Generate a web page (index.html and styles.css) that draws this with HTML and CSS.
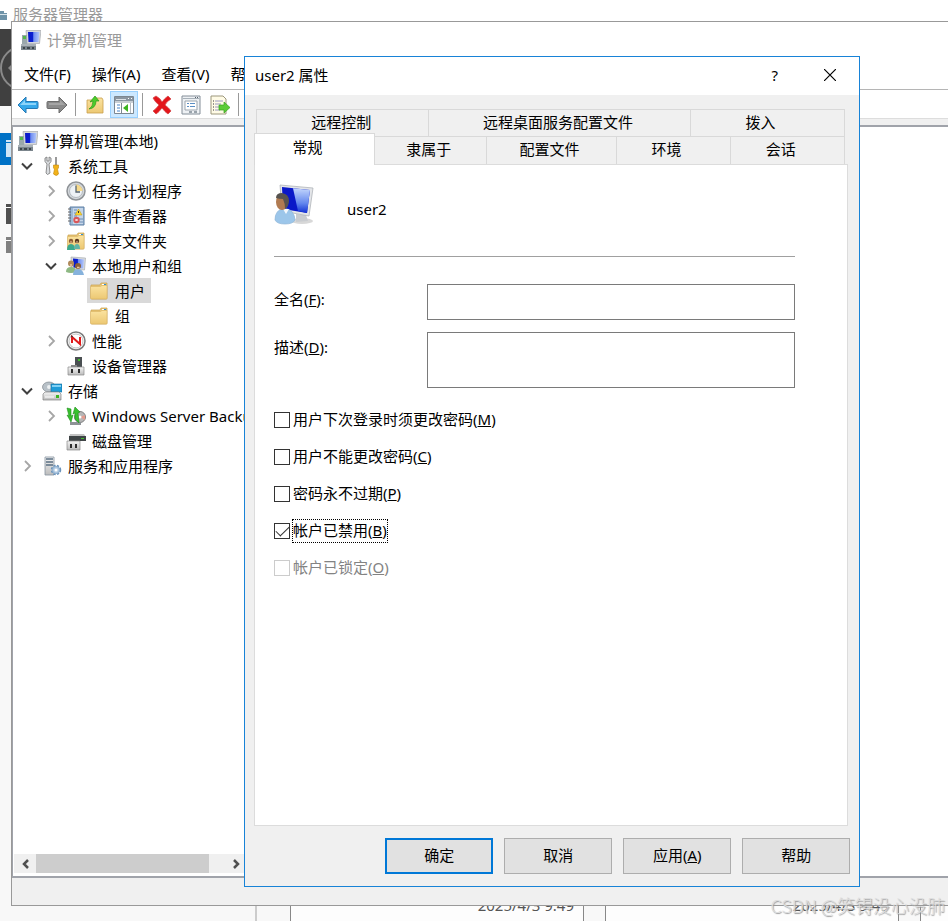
FILE: index.html
```
<!DOCTYPE html>
<html lang="zh-CN">
<head>
  <meta charset="UTF-8">
  <meta name="viewport" content="width=device-width, initial-scale=1.0">
  <title>user2 属性</title>
  <link rel="stylesheet" href="styles.css">
</head>
<body>
  <!-- shared icons -->
  <svg class="defs" width="0" height="0">
    <defs>
      <linearGradient id="blueScreen" x1="0" y1="0" x2="1" y2="0">
        <stop offset="0" stop-color="#0a18c8"/>
        <stop offset="0.4" stop-color="#0a1fd0"/>
        <stop offset="0.5" stop-color="#6f8df0"/>
        <stop offset="1" stop-color="#b4c8fa"/>
      </linearGradient>
      <linearGradient id="userScreen" x1="0" y1="0" x2="0" y2="1">
        <stop offset="0" stop-color="#c3d6fc"/>
        <stop offset="0.6" stop-color="#6488ee"/>
        <stop offset="1" stop-color="#1030d4"/>
      </linearGradient>
      <linearGradient id="folderFill" x1="0" y1="0" x2="0" y2="1">
        <stop offset="0" stop-color="#fbe3a0"/>
        <stop offset="1" stop-color="#ecc873"/>
      </linearGradient>
      <linearGradient id="metal" x1="0" y1="0" x2="0" y2="1">
        <stop offset="0" stop-color="#f4f4f4"/>
        <stop offset="1" stop-color="#bcbcbc"/>
      </linearGradient>
      <symbol id="computer" viewBox="0 0 20 20">
        <path d="M5 .5h15l-1.500 13H6z" fill="#d5d8dc" stroke="#9a9ea3" stroke-width=".6"/>
        <path d="M7 2h11.500l-1 10H7.500z" fill="url(#blueScreen)"/>
        <path d="M1 5h5v9H1z" fill="#9aa7ab"/>
        <path d="M2 6h3v3H2z" fill="#55b84a"/>
        <path d="M0 14h15v6H0z" fill="#7b858c"/>
        <path d="M0 14h15v2H0z" fill="#a9b1b7"/>
        <path d="M2 17h2v2H2zM6 17h3v2H6zM11 17h2v2h-2z" fill="#3d464c"/>
      </symbol>
      <symbol id="folder" viewBox="0 0 20 20">
        <path d="M2 4l9 0 1-2h6v15q0 1-1 1H3q-1 0-1-1z" fill="#e9c677" stroke="#c79f4a" stroke-width=".7"/>
        <path d="M13 3h4v1h-4z" fill="#fff"/>
        <path d="M15 3h2v1h-2z" fill="#2b8fd8"/>
        <path d="M1.500 5.500h10l1.500-1h5V18H2.500q-1 0-1-1z" fill="url(#folderFill)" stroke="#d5ad59" stroke-width=".5"/>
      </symbol>
      <symbol id="open" viewBox="0 0 12 12">
        <path d="M1 3.500l5 5 5-5" fill="none" stroke="#404040" stroke-width="2"/>
      </symbol>
      <symbol id="closed" viewBox="0 0 12 12">
        <path d="M4 1l5 5-5 5" fill="none" stroke="#a6a6a6" stroke-width="1.800"/>
      </symbol>
    </defs>
  </svg>

  <main class="desktop">
    <!-- server manager, mostly covered -->
    <section class="server">
      <header class="server-title">
        <svg width="8" height="12" viewBox="0 0 8 12"><path d="M0 3h4v2h3v7H0z" fill="#6f93a8"/><path d="M0 6h7v1H0z" fill="#d8e4ea"/></svg>
        服务器管理器
      </header>
      <div class="server-banner">
        <svg width="12" height="77" viewBox="0 0 12 77"><circle cx="22" cy="39" r="21" fill="none" stroke="#8a8a8a" stroke-width="2"/><path d="M12 35l-4 4 4 4z" fill="#8a8a8a"/></svg>
      </div>
      <svg class="server-nav" width="12" height="130" viewBox="0 0 12 130">
        <path d="M0 0h12v32H0z" fill="#0072c6"/>
        <path d="M6 7h6v17H6z" fill="#cfe5f6"/><path d="M6 9h6v1H6z" fill="#0072c6"/>
        <path d="M11 39h1v19h-1z" fill="#555"/>
        <path d="M6 71h6v20H6z" fill="#505050"/><path d="M6 74h6v1H6z" fill="#fff"/>
        <path d="M6 104h6v16H6z" fill="#808080"/><path d="M6 107h6v1H6z" fill="#fff"/>
      </svg>
      <div class="server-tiles">
        <div class="tile">2025/4/3 9:49</div>
        <div class="tile">2025/4/3 9:49</div>
        <div class="tile"></div>
      </div>
    </section>

    <section class="manager">
      <header class="manager-title">
        <svg width="20" height="20"><use href="#computer"/></svg>
        计算机管理
      </header>
      <nav class="menu">
        <button>文件(F)</button>
        <button>操作(A)</button>
        <button>查看(V)</button>
        <button>帮助(H)</button>
      </nav>
      <div class="toolbar">
        <button aria-label="后退"><svg width="22" height="20" viewBox="0 0 22 20"><path d="M1 10l8-8v4.500h11q1 0 1 1v5q0 1-1 1H9V18z" fill="#35a8ea" stroke="#2479b5"/><path d="M3 10l5-5v3h11v2z" fill="#8cd4fa"/></svg></button>
        <button aria-label="前进"><svg width="22" height="20" viewBox="0 0 22 20"><path d="M21 10l-8-8v4.500H2q-1 0-1 1v5q0 1 1 1h11V18z" fill="#8b8b8b" stroke="#6c6c6c"/><path d="M19 10l-5-5v3H3v2z" fill="#a5a5a5"/></svg></button>
        <span class="sep"></span>
        <button aria-label="向上"><svg width="20" height="20" viewBox="0 0 20 20"><path d="M2 5h7l1-2h7l1 2v13H2z" fill="url(#folderFill)" stroke="#c9a04c" stroke-width=".8"/><path d="M4 14q4-2 4-8l-3 1 5-6 4 5-3 0Q11 13 4 14z" fill="#4ccb2c" stroke="#2c9a19" stroke-width=".7"/></svg></button>
        <button class="on" aria-label="显示控制台树"><svg width="20" height="18" viewBox="0 0 20 18"><path d="M.5.500h19v17H.500z" fill="#fff" stroke="#7c8791"/><path d="M1 1h18v4H1z" fill="#8a96a2"/><path d="M2 3h10v1H2z" fill="#dce2e8"/><path d="M14 2h1v1h-1zM17 2h1v1h-1z" fill="#fff"/><path d="M1 5h18v2H1z" fill="#c8ced4"/><path d="M7.500 7v10" stroke="#7c8791"/><path d="M3 9h3M3 12h3M3 15h3" stroke="#4684c8"/><path d="M14 8v8l-5-4z" fill="#3db421"/><path d="M16.500 7v10" stroke="#b3bac1"/></svg></button>
        <span class="sep"></span>
        <button aria-label="删除"><svg width="20" height="20" viewBox="0 0 20 20"><path d="M1 3l3-2q4 2 6 6 3-4 6-6l3 3q-4 2-6 6 4 3 6 6l-3 3q-3-2-6-6-3 4-6 6l-3-3q3-2 6-6-4-3-6-7z" fill="#e3161b" stroke="#d4474a" stroke-width=".8"/></svg></button>
        <button aria-label="属性"><svg width="20" height="20" viewBox="0 0 20 20"><path d="M1 1h18v18H1z" fill="#eef1f4" stroke="#848e98"/><path d="M2 3.500h16" stroke="#a7b0b8"/><path d="M14 2h1v1h-1zM16 2h1v1h-1z" fill="#57626c"/><path d="M4 6h12v9H4z" fill="#fff" stroke="#9da6ae"/><path d="M6 8.500h2M9 8.500h5M6 11.500h2M9 11.500h5" stroke="#5b8fc5"/><path d="M8 17h3M13 17h3" stroke="#7e8993" stroke-width="1.500"/></svg></button>
        <button aria-label="导出列表"><svg width="20" height="20" viewBox="0 0 20 20"><path d="M1 1h12l3 3v15H1z" fill="#fffbe6" stroke="#9c977c"/><path d="M3 6h1M3 9h1M3 12h1M3 15h1" stroke="#333"/><path d="M5 6h8M5 9h6M5 12h4M5 15h5" stroke="#9a9ac0"/><path d="M9 10h5V7l6 5.500-6 5.500v-3H9z" fill="#5ccc38" stroke="#37a31c" stroke-width=".7"/></svg></button>
        <span class="sep"></span>
      </div>
      <div class="panes">
        <div class="tree-pane">
          <ul class="tree">
            <li class="root"><svg class="icon" viewBox="0 0 20 20"><use href="#computer"/></svg>计算机管理(本地)</li>
            <li class="l1"><svg class="arrow"><use href="#open"/></svg>
              <svg class="icon" viewBox="0 0 20 20"><path d="M3 2q-1 4 2 6l-1 9q1 3 4 0L7 8q3-2 2-6L7 1v4H5V1z" fill="#d9dcdf" stroke="#777" stroke-width=".8"/><path d="M13 1h2v9h-2z" fill="#999"/><path d="M11.500 9h5v3l-1 1 1 5q-2 3-5 0l1-5-1-1z" fill="#f2b21a" stroke="#bf860d" stroke-width=".6"/></svg>系统工具</li>
            <li class="l2"><svg class="arrow"><use href="#closed"/></svg>
              <svg class="icon" viewBox="0 0 20 20"><circle cx="10" cy="10" r="9" fill="#d4d8dc" stroke="#8f9397" stroke-width="1.500"/><circle cx="10" cy="10" r="6.500" fill="#eef2f6" stroke="#b4bac0"/><path d="M10 3.500A6.500 6.500 0 0 1 16.500 10H10z" fill="#f6d98b"/><path d="M10 4.500V11h4" fill="none" stroke="#56646e" stroke-width="1.300"/></svg>任务计划程序</li>
            <li class="l2"><svg class="arrow"><use href="#closed"/></svg>
              <svg class="icon" viewBox="0 0 20 20"><path d="M4 1h14v18H4z" fill="#9db9d6" stroke="#5d7ea4"/><path d="M7 2h10v16H7z" fill="#c5d5e8"/><path d="M8 4h3M8 7h3M8 10h3M13 13h4M13 16h4" stroke="#6d8db5"/><path d="M2 3h3M2 6h3M2 9h3M2 12h3M2 15h3" stroke="#666" stroke-width="1.200"/><path d="M12.500 3l3.500 6h-7z" fill="#ffd72e" stroke="#b89410" stroke-width=".5"/><path d="M12.500 5v2" stroke="#333"/><circle cx="10.500" cy="14" r="3.200" fill="#d8575a"/><path d="M9.500 13l2 2m0-2l-2 2" stroke="#fff"/></svg>事件查看器</li>
            <li class="l2"><svg class="arrow"><use href="#closed"/></svg>
              <svg class="icon" viewBox="0 0 20 20"><use href="#folder"/><circle cx="5" cy="10" r="2.200" fill="#8c5b36"/><path d="M1 19q0-6 4-6t4 6z" fill="#3ba98d"/><circle cx="11" cy="10" r="2.200" fill="#5b3a22"/><path d="M8 18q0-5 3-5t3 5z" fill="#5fb4a8"/><path d="M4 11h2M10 11h2" stroke="#f0c8a0"/></svg>共享文件夹</li>
            <li class="l2"><svg class="arrow"><use href="#open"/></svg>
              <svg class="icon" viewBox="0 0 20 20"><path d="M5 1l14.500 1-1 12-13-1z" fill="#d8dbdf" stroke="#a0a4a8" stroke-width=".6"/><path d="M7 2.500l11 1-.7 9-9.800-1z" fill="url(#blueScreen)"/><circle cx="5" cy="7.500" r="3" fill="#b08a5c"/><path d="M0 16q0-5 5-5t5 5q-5 2-10 0z" fill="#8db883"/><circle cx="12" cy="10" r="3" fill="#8b6038"/><path d="M7 19q0-6 5-6t6 6z" fill="#86b2dc"/><path d="M11 11.500h2.500M4 9h2" stroke="#edc49c" stroke-width="1.500"/></svg>本地用户和组</li>
            <li class="l3"><span class="selected"><svg class="icon"><use href="#folder"/></svg>用户</span></li>
            <li class="l3"><span><svg class="icon"><use href="#folder"/></svg>组</span></li>
            <li class="l2"><svg class="arrow"><use href="#closed"/></svg>
              <svg class="icon" viewBox="0 0 20 20"><circle cx="10" cy="10" r="9" fill="#fff" stroke="#7b7b7b" stroke-width="1.500"/><circle cx="10" cy="10" r="7" fill="#fff" stroke="#c0c0c0"/><path d="M6 12V6l8 7V6" fill="none" stroke="#e01b1b" stroke-width="2"/><path d="M5 5l2 1" stroke="#333"/></svg>性能</li>
            <li class="l2"><svg class="arrow"></svg>
              <svg class="icon" viewBox="0 0 20 20"><path d="M9 1h7v10H9z" fill="#4a4f52"/><path d="M12 3h2v2h-2z" fill="#42c02e"/><path d="M5 9h6v2H5z" fill="#888"/><path d="M2 11h16v8H2z" fill="url(#metal)" stroke="#8b8b8b" stroke-width=".7"/><path d="M5 13h2v4H5zM12 13h2v4h-2z" fill="#2d2d2d"/></svg>设备管理器</li>
            <li class="l1"><svg class="arrow"><use href="#open"/></svg>
              <svg class="icon" viewBox="0 0 20 20"><ellipse cx="7" cy="6" rx="6.500" ry="5" fill="#b8c1c8" stroke="#7f888f" stroke-width=".7"/><circle cx="7" cy="6" r="2" fill="#edf0f2"/><path d="M9 3h11v8H9z" fill="#1e9bd7" stroke="#146b9c" stroke-width=".6"/><path d="M10 4h9v2h-9z" fill="#7fd0f4"/><path d="M1 13l2-2h14l2 2v6H1z" fill="url(#metal)" stroke="#838383" stroke-width=".7"/><path d="M14 14h3v3h-3z" fill="#3db421"/><path d="M3 16h9" stroke="#fff"/></svg>存储</li>
            <li class="l2"><svg class="arrow"><use href="#closed"/></svg>
              <svg class="icon" viewBox="0 0 20 20"><circle cx="14" cy="11" r="5.500" fill="#b7b7b7" stroke="#828282"/><path d="M14 11l5-2v5z" fill="#e49b8e"/><circle cx="14" cy="11" r="1.500" fill="#fff"/><path d="M4 16h11v3H4z" fill="#8d9296"/><path d="M1 2l4 1v7l2-1-2 7L1 9l2 1zM13 17l-4-4V7L7 8l2-7 5 5-2 1z" fill="#37c02d" stroke="#1e8f1b" stroke-width=".6"/></svg>Windows Server Backup</li>
            <li class="l2"><svg class="arrow"></svg>
              <svg class="icon" viewBox="0 0 20 20"><path d="M4 3h14l2 3H3z" fill="#c3c3c3"/><path d="M3 5h17v5H3z" fill="#3f4446"/><path d="M15 7h3v1h-3z" fill="#42c02e"/><path d="M1 10h13v9H1z" fill="url(#metal)" stroke="#8b8b8b" stroke-width=".7"/><path d="M4 13h2v4H4zM9 13h2v4H9z" fill="#2d2d2d"/></svg>磁盘管理</li>
            <li class="l1"><svg class="arrow"><use href="#closed"/></svg>
              <svg class="icon" viewBox="0 0 20 20"><path d="M3 1h9v18H3z" fill="url(#metal)" stroke="#8593a0" stroke-width=".8"/><path d="M4 3h7M4 6h7M4 9h7" stroke="#5a6f82" stroke-width="1.300"/><circle cx="14" cy="14" r="4" fill="#b3cbe2" stroke="#6b93ba" stroke-width="2.500" stroke-dasharray="2 1.200"/><circle cx="14" cy="14" r="3.500" fill="#b3cbe2" stroke="#8fb0d0"/><circle cx="14" cy="14" r="1.500" fill="#fff"/></svg>服务和应用程序</li>
          </ul>
          <div class="scrollbar">
            <button aria-label="向左滚动"><svg width="8" height="10" viewBox="0 0 8 10"><path d="M7 1L3 5l4 4" fill="none" stroke="#505050" stroke-width="2.500"/></svg></button>
            <div class="track"><div class="thumb"></div></div>
            <button aria-label="向右滚动"><svg width="8" height="10" viewBox="0 0 8 10"><path d="M1 1l4 4-4 4" fill="none" stroke="#505050" stroke-width="2.500"/></svg></button>
          </div>
        </div>
        <div class="list-pane"></div>
      </div>
      <footer class="status"></footer>
    </section>

    <section class="dialog" role="dialog" aria-labelledby="dialogTitle">
      <header class="dialog-title">
        <h1 id="dialogTitle">user2 属性</h1>
        <button aria-label="帮助">?</button>
        <button aria-label="关闭"><svg width="12" height="12" viewBox="0 0 12 12"><path d="M0 0l12 12M12 0L0 12" stroke="#000" stroke-width="1.200"/></svg></button>
      </header>
      <div class="tabs" role="tablist">
        <div class="tab-row back">
          <button role="tab">远程控制</button>
          <button role="tab">远程桌面服务配置文件</button>
          <button role="tab" class="wide">拨入</button>
        </div>
        <div class="tab-row front">
          <button role="tab" class="active wide" aria-selected="true">常规</button>
          <button role="tab">隶属于</button>
          <button role="tab">配置文件</button>
          <button role="tab" class="wide">环境</button>
          <button role="tab" class="wide">会话</button>
        </div>
      </div>
      <form class="panel" id="props">
        <div class="user">
          <svg width="42" height="42" viewBox="0 0 42 42">
            <ellipse cx="28" cy="37" rx="11" ry="3" fill="#d8d8d8"/>
            <path d="M22 30l10 1 2 6-12 1z" fill="#c9ccd0"/>
            <path d="M6 1l33 3-4 28-27-5z" fill="#e3e5e8" stroke="#b1b5ba" stroke-width=".8"/>
            <path d="M8 3l28 3-3 23-24-4z" fill="#0a18c8"/>
            <path d="M19 4.200L36 6l-3 23-9-2z" fill="url(#userScreen)"/>
            <path d="M1 36q0-10 8-11h4q7 1 8 11-2 4-10 4T1 36z" fill="#9cc6ea" stroke="#8fb6d8" stroke-width=".7"/>
            <path d="M9 25l3 5 3-5z" fill="#f4f8fc"/>
            <ellipse cx="8" cy="18" rx="6" ry="8" fill="#b17b51"/>
            <path d="M2 14q0-5 6-5 7 1 7 8 0 5-4 8 0-6-2-10-4 0-7-1z" fill="#57534f"/>
          </svg>
          <span>user2</span>
        </div>
        <hr>
        <div class="fields">
          <label for="fullname">全名(<u>F</u>):</label>
          <input type="text" id="fullname">
          <label for="desc">描述(<u>D</u>):</label>
          <textarea id="desc"></textarea>
        </div>
        <div class="checks">
          <label><input type="checkbox"><span>用户下次登录时须更改密码(<u>M</u>)</span></label>
          <label><input type="checkbox"><span>用户不能更改密码(<u>C</u>)</span></label>
          <label><input type="checkbox"><span>密码永不过期(<u>P</u>)</span></label>
          <label class="focused"><input type="checkbox" checked><span>帐户已禁用(<u>B</u>)</span></label>
          <label class="disabled"><input type="checkbox" disabled><span>帐户已锁定(<u>O</u>)</span></label>
        </div>
      </form>
      <footer class="buttons">
        <button class="default">确定</button>
        <button>取消</button>
        <button>应用(<u>A</u>)</button>
        <button>帮助</button>
      </footer>
    </section>

    <div class="watermark">CSDN @笑锝没心没肺</div>
  </main>
</body>
</html>
```

FILE: styles.css
```
* {
  margin: 0;
  padding: 0;
  box-sizing: border-box;
}
body, button, input, textarea {
  font-family: "Noto Sans", "Noto Sans CJK SC", sans-serif;
  font-size: 15px;
  line-height: 20px;
  color: #000;
}
button {
  border: none;
  background: none;
}
svg {
  display: block;
  flex: none;
}
.defs {
  position: absolute;
}
.desktop {
  position: relative;
  height: 100vh;
  min-height: 760px;
  overflow: hidden;
  background: #f8f8f8;
}

/* server manager behind everything */
.server {
  height: 100%;
  display: flex;
  flex-direction: column;
}
.server-title {
  display: flex;
  align-items: center;
  gap: 5px;
  height: 29px;
  padding-bottom: 1px;
  background: #fff;
  color: #999;
}
.server-banner {
  height: 77px;
  background: #404040;
}
.server-nav {
  margin-top: 27px;
}
.server-tiles {
  display: flex;
  gap: 21px;
  margin: auto 0 0 255px;
  padding-left: 33px;
  border-left: 2px solid #ccc;
  overflow: hidden;
}
.tile {
  flex: none;
  width: 294px;
  height: 26px;
  padding-right: 9px;
  border: 1px solid #888;
  border-width: 0 1px;
  background: #fdfdfd;
  color: #555;
  text-align: right;
}

/* computer management */
.manager {
  position: absolute;
  top: 21px;
  left: 11px;
  right: -3px;
  bottom: 15px;
  display: flex;
  flex-direction: column;
  background: #fff;
  border: 1px solid #999;
}
.manager-title {
  display: flex;
  align-items: center;
  gap: 6px;
  height: 36px;
  padding-left: 9px;
  color: #999;
}
.menu {
  display: flex;
  gap: 21px;
  height: 32px;
  padding: 0 12px;
  align-items: center;
  border-bottom: 1px solid #b5b5b5;
}
.toolbar {
  display: flex;
  align-items: center;
  gap: 1px;
  height: 29px;
  padding: 1px 0 0 2px;
  border-bottom: 1px solid #ddd;
}
.toolbar button {
  display: flex;
  align-items: center;
  justify-content: center;
  width: 28px;
  height: 27px;
}
.toolbar .on {
  background: #cce8ff;
  border: 1px solid #99d1ff;
}
.sep {
  width: 1px;
  height: 23px;
  margin: 0 4px 0 3px;
  background: #999;
}
.panes {
  flex: 1;
  display: flex;
  min-height: 0;
  border-top: 6px solid #f0f0f0;
}
.tree-pane {
  display: flex;
  flex-direction: column;
  width: 240px;
  padding: 1px 2px 3px 1px;
  border: 2px solid #a0a3aa;
  border-left-width: 1px;
}
.list-pane {
  flex: 1;
  border: 2px solid #a0a3aa;
}
.tree {
  flex: 1;
  overflow: hidden;
  list-style: none;
}
.tree li {
  display: flex;
  align-items: center;
  height: 25px;
  white-space: nowrap;
}
.tree .icon {
  width: 20px;
  height: 20px;
  margin-right: 6px;
}
.arrow {
  width: 12px;
  height: 12px;
  margin-right: 9px;
}
.root {
  padding-left: 4px;
}
.l1 {
  padding-left: 7px;
}
.l2 {
  padding-left: 31px;
}
.l3 {
  padding-left: 73px;
}
.l3 span {
  display: flex;
  align-items: center;
  height: 25px;
  padding: 0 6px 0 2px;
}
.l3 .selected {
  background: #d9d9d9;
}
.scrollbar {
  display: flex;
  height: 19px;
  background: #f0f0f0;
}
.scrollbar button {
  display: flex;
  align-items: center;
  justify-content: center;
  width: 22px;
}
.track {
  flex: 1;
}
.thumb {
  width: 91%;
  height: 100%;
  background: #cdcdcd;
}
.status {
  height: 27px;
  background: #f0f0f0;
}

/* properties dialog */
.dialog {
  position: absolute;
  top: 56px;
  left: 244px;
  bottom: 34px;
  width: 65%;
  display: flex;
  flex-direction: column;
  padding-bottom: 12px;
  background: #f0f0f0;
  border: 1px solid #1883d7;
}
.dialog-title {
  display: flex;
  align-items: center;
  height: 38px;
  padding: 0 2px 2px 10px;
  background: #fff;
}
.dialog-title h1 {
  flex: 1;
  font-size: 15px;
  font-weight: normal;
}
.dialog-title button {
  display: flex;
  align-items: center;
  justify-content: center;
  width: 55px;
  height: 36px;
}
.tabs {
  margin: 14px 14px 0 9px;
}
.tab-row {
  display: grid;
}
.tab-row button {
  height: 28px;
  padding: 0 3px 3px 0;
  border: 1px solid #d9d9d9;
  border-width: 1px 1px 0 0;
}
.tab-row .wide {
  padding-right: 14px;
}
.back {
  grid-template-columns: 173fr 262fr 155fr;
  margin-left: 2px;
  border-left: 1px solid #d9d9d9;
}
.back button {
  height: 27px;
}
.front {
  grid-template-columns: 121fr 112fr 130fr 115fr 114fr;
}
.front .active {
  height: 32px;
  margin: -3px 0 -1px;
  padding-bottom: 5px;
  background: #fff;
  border-left-width: 1px;
  position: relative;
}
.panel {
  flex: 1;
  margin: 0 11px 0 9px;
  padding: 15px 52px 0 19px;
  background: #fff;
  border: 1px solid #dcdcdc;
}
.user {
  display: flex;
  align-items: center;
  gap: 31px;
  height: 50px;
}
.user span {
  padding-top: 7px;
}
hr {
  margin: 26px 0 27px;
  border: none;
  border-top: 1px solid #a0a0a0;
}
.fields {
  display: grid;
  grid-template-columns: 153px 1fr;
  row-gap: 12px;
}
.fields label {
  padding-top: 5px;
}
.fields input, .fields textarea {
  width: 100%;
  height: 36px;
  padding: 4px;
  border: 1px solid #7a7a7a;
  outline: none;
  resize: none;
}
.fields textarea {
  display: block;
  height: 56px;
}
.checks {
  display: flex;
  flex-direction: column;
  align-items: flex-start;
  gap: 13px;
  margin-top: 20px;
}
.checks label {
  display: flex;
  align-items: center;
  gap: 2px;
  height: 24px;
}
.checks span {
  padding: 0 0 2px;
  border: 1px solid transparent;
}
.checks input {
  appearance: none;
  width: 16px;
  height: 16px;
  border: 1px solid #333;
  background: #fff;
}
.checks input:checked {
  display: grid;
  place-items: center;
}
.checks input:checked::before {
  content: "";
  width: 12px;
  height: 6px;
  border: solid #333;
  border-width: 0 0 1px 1px;
  transform: translateY(-2px) rotate(-45deg);
}
.checks .focused span {
  border: 1px dotted #000;
}
.checks .disabled {
  color: #838383;
}
.checks .disabled input {
  border-color: #ccc;
}
.buttons {
  display: flex;
  justify-content: flex-end;
  gap: 11px;
  padding: 12px 9px 0;
}
.buttons button {
  width: 108px;
  height: 36px;
  padding-bottom: 2px;
  background: #e1e1e1;
  border: 1px solid #adadad;
}
.buttons .default {
  border: 2px solid #0078d7;
}

.watermark {
  position: absolute;
  right: 3px;
  bottom: 4px;
  font-family: "Noto Sans CJK SC", sans-serif;
  font-size: 18px;
  font-weight: 300;
  line-height: 24px;
  color: #ddd;
  text-shadow: 1px 1px 1px #999;
}
```
